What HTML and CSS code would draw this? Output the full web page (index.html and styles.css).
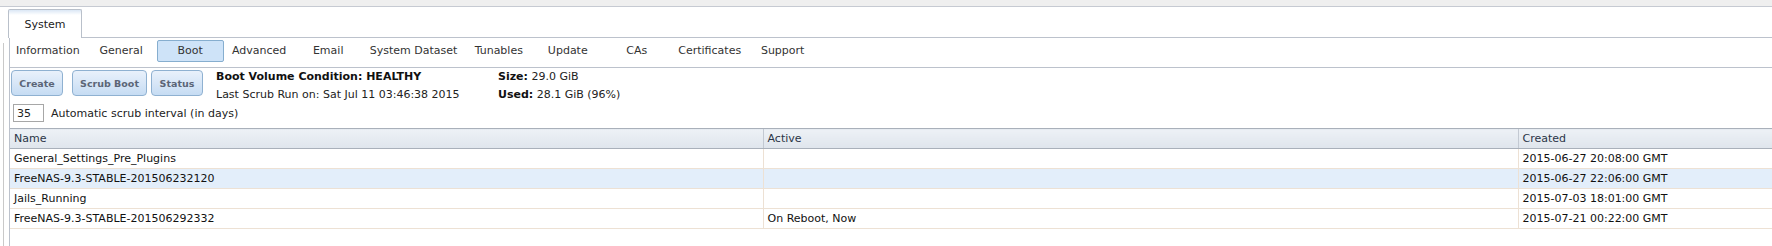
FILE: index.html
```html
<!DOCTYPE html>
<html lang="en">
<head>
    <meta charset="UTF-8">
    <title>System - Boot</title>
    <link rel="stylesheet" href="styles.css">
</head>
<body>
    <div class="topbar"></div>
    <div class="layout">
        <div class="leftpane"></div>
        <div class="main">
            <div class="tabstrip">
                <div class="tab">System</div>
            </div>
            <div class="panel">
                <div class="subnav">
                    <span class="subtab">Information</span>
                    <span class="subtab">General</span>
                    <span class="subtab active">Boot</span>
                    <span class="subtab">Advanced</span>
                    <span class="subtab">Email</span>
                    <span class="subtab">System Dataset</span>
                    <span class="subtab">Tunables</span>
                    <span class="subtab">Update</span>
                    <span class="subtab">CAs</span>
                    <span class="subtab">Certificates</span>
                    <span class="subtab">Support</span>
                </div>

                <div class="bootinfo">
                    <div class="toolbar">
                        <button class="btn create">Create</button>
                        <button class="btn scrub">Scrub Boot</button>
                        <button class="btn">Status</button>
                    </div>
                    <div class="status">
                        <div><b>Boot Volume Condition: HEALTHY</b></div>
                        <div>Last Scrub Run on: Sat Jul 11 03:46:38 2015</div>
                    </div>
                    <div class="usage">
                        <div><b>Size:</b> 29.0 GiB</div>
                        <div><b>Used:</b> 28.1 GiB (96%)</div>
                    </div>
                </div>
                <div class="interval">
                    <input class="days" type="text" value="35">
                    <span>Automatic scrub interval (in days)</span>
                </div>

                <table class="grid">
                    <colgroup>
                        <col class="c-name">
                        <col class="c-active">
                        <col>
                    </colgroup>
                    <thead>
                        <tr><th>Name</th><th>Active</th><th>Created</th></tr>
                    </thead>
                    <tbody>
                        <tr><td>General_Settings_Pre_Plugins</td><td></td><td>2015-06-27 20:08:00 GMT</td></tr>
                        <tr class="hover"><td>FreeNAS-9.3-STABLE-201506232120</td><td></td><td>2015-06-27 22:06:00 GMT</td></tr>
                        <tr><td>Jails_Running</td><td></td><td>2015-07-03 18:01:00 GMT</td></tr>
                        <tr><td>FreeNAS-9.3-STABLE-201506292332</td><td>On Reboot, Now</td><td>2015-07-21 00:22:00 GMT</td></tr>
                    </tbody>
                </table>
            </div>
        </div>
    </div>
</body>
</html>
```

FILE: styles.css
```css
body {
    margin: 0;
    padding: 0;
    font-family: "DejaVu Sans", Verdana, sans-serif;
    font-size: 11px;
    color: #222;
    background: #fff;
}
.topbar {
    height: 6px;
    background: #efefef;
    border-bottom: 1px solid #c6cad2;
}
.layout {
    display: flex;
    height: 239px;
}
.leftpane {
    width: 3px;
    margin-top: 36px;
    border-right: 1px solid #c9c9c9;
}
.main {
    flex: 1;
    margin-left: 5px;
    display: flex;
    flex-direction: column;
}
.tabstrip {
    padding-top: 2px;
    border-bottom: 1px solid #bcc2cc;
    display: flex;
}
.tab {
    width: 72px;
    height: 27px;
    line-height: 30px;
    text-align: center;
    border: 1px solid #b9c0ca;
    border-bottom: none;
    border-radius: 2px 2px 0 0;
    background: linear-gradient(#dbe7f5, #fff 5px);
    margin: 0 0 -1px -1px;
    padding-bottom: 1px;
    color: #222;
}
.panel {
    flex: 1;
    border-left: 1px solid #bcc2cc;
}
.subnav {
    display: flex;
    gap: 2px;
    padding: 2px 0 5px 0;
    border-bottom: 1px solid #bcc2cc;
}
.subtab {
    min-width: 67px;
    box-sizing: border-box;
    height: 22px;
    line-height: 20px;
    padding: 0 5px;
    text-align: center;
    border: 1px solid transparent;
    color: #333;
}
.subtab.active {
    background: #cee3f8;
    border-color: #86aecf;
    border-radius: 2px;
}
.bootinfo {
    display: flex;
    line-height: 18px;
}
.toolbar {
    display: flex;
    align-items: flex-start;
    padding: 2px 0 0 1px;
    width: 205px;
}
.btn {
    box-sizing: border-box;
    height: 26px;
    padding: 0;
    white-space: nowrap;
    font-family: "DejaVu Sans", Verdana, sans-serif;
    font-size: 9.5px;
    font-weight: bold;
    color: #5b6577;
    border: 1px solid #8fb1d1;
    border-radius: 4px;
    background: linear-gradient(#e9f1fb, #c6dcf3);
    width: 52px;
    margin: 0 4px 0 0;
}
.btn.create {
    margin-right: 9px;
}
.btn.scrub {
    width: 75px;
}
.status {
    width: 282px;
}
.status b,
.usage b {
    color: #111;
}
.interval {
    display: flex;
    align-items: center;
    padding-left: 3px;
    height: 18px;
    gap: 7px;
}
.days {
    width: 31px;
    height: 18px;
    box-sizing: border-box;
    border: 1px solid #a7a7a7;
    padding: 0 3px;
    margin: 0;
    font-family: "DejaVu Sans", Verdana, sans-serif;
    font-size: 11px;
    color: #222;
}
.grid {
    width: 100%;
    table-layout: fixed;
    border-collapse: collapse;
    margin-top: 6px;
}
.c-name {
    width: 753px;
}
.c-active {
    width: 755px;
}
.grid th {
    height: 19px;
    padding: 0 4px;
    text-align: left;
    font-weight: normal;
    color: #2b3547;
    background: linear-gradient(#edf1f6, #dfe5ec);
    border-top: 1px solid #a9b0ba;
    border-bottom: 1px solid #a9b0ba;
    border-left: 1px solid #c3c9d2;
}
.grid th:first-child {
    border-left: none;
}
.grid td {
    height: 19px;
    padding: 0 4px;
    border-bottom: 1px solid #ede1d4;
    border-left: 1px solid #ede1d4;
    color: #111;
    white-space: nowrap;
}
.grid td:first-child {
    border-left: none;
}
.grid tr.hover td {
    background: #e3eefa;
}
```
